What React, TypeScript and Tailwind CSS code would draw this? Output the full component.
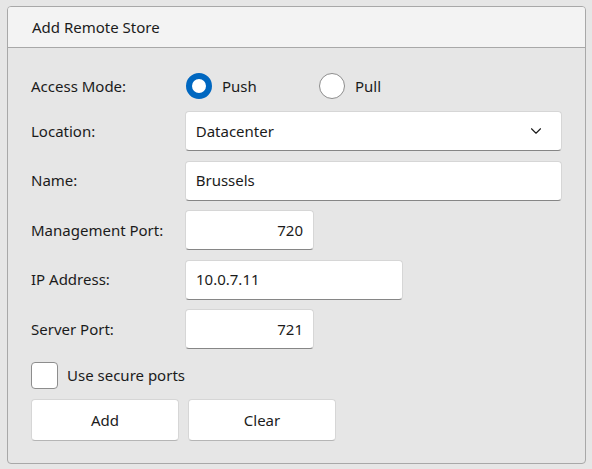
import { ChevronDown } from 'lucide-react';

const inputBox =
    'h-[40px] rounded-[4px] border border-[#d6d6d6] border-b-[#868686] bg-white px-[10px] flex items-center text-[15px] text-[#1b1b1b]';

function Row({ label, children }: { label: string; children: React.ReactNode }) {
    return (
        <div className="flex items-center">
            <div className="w-[154px] text-[15px] text-[#1b1b1b]">{label}</div>
            {children}
        </div>
    );
}

function Radio({ label, checked }: { label: string; checked?: boolean }) {
    return (
        <div className="flex w-[133px] items-center gap-[10px]">
            {checked ? (
                <span className="h-[26px] w-[26px] rounded-full border-[6px] border-[#0067c0] bg-white" />
            ) : (
                <span className="h-[26px] w-[26px] rounded-full border border-[#8d8d8d] bg-white" />
            )}
            <span className="text-[15px] text-[#1b1b1b]">{label}</span>
        </div>
    );
}

export default function App() {
    return (
        <div className="h-[469px] w-[592px] bg-[#e6e6e6] pt-[6px] pl-[7px] font-['Noto_Sans',sans-serif]">
            <div className="h-[458px] w-[579px] overflow-hidden rounded-[4px] border border-[#a8a8a8] bg-[#e6e6e6]">
                <div className="flex h-[41px] items-center border-b border-[#a8a8a8] bg-[#f3f3f3] pl-[24px] text-[15px] text-[#1b1b1b]">
                    Add Remote Store
                </div>
                <div className="flex flex-col px-[23px] pt-[25px]">
                    <Row label="Access Mode:">
                        <div className="flex items-center pl-[1px]">
                            <Radio label="Push" checked />
                            <Radio label="Pull" />
                        </div>
                    </Row>
                    <div className="mt-[12px] flex flex-col gap-[9.5px]">
                        <Row label="Location:">
                            <div className={`${inputBox} w-[378px] justify-between`}>
                                <span>Datacenter</span>
                                <ChevronDown size={18} strokeWidth={1.5} className="mr-[6px] text-[#1b1b1b]" />
                            </div>
                        </Row>
                        <Row label="Name:">
                            <div className={`${inputBox} w-[378px]`}>Brussels</div>
                        </Row>
                        <Row label="Management Port:">
                            <div className={`${inputBox} w-[129px] justify-end`}>720</div>
                        </Row>
                        <Row label="IP Address:">
                            <div className={`${inputBox} w-[218px]`}>10.0.7.11</div>
                        </Row>
                        <Row label="Server Port:">
                            <div className={`${inputBox} w-[129px] justify-end`}>721</div>
                        </Row>
                    </div>
                    <div className="mt-[13px] flex items-center gap-[9px]">
                        <span className="h-[27px] w-[27px] rounded-[4px] border border-[#8d8d8d] bg-white" />
                        <span className="text-[15px] text-[#1b1b1b]">Use secure ports</span>
                    </div>
                    <div className="mt-[10px] flex gap-[9px]">
                        <button className="h-[42px] w-[148px] rounded-[4px] border border-[#d6d6d6] border-b-[#b5b5b5] bg-white text-[15px] text-[#1b1b1b]">
                            Add
                        </button>
                        <button className="h-[42px] w-[148px] rounded-[4px] border border-[#d6d6d6] border-b-[#b5b5b5] bg-white text-[15px] text-[#1b1b1b]">
                            Clear
                        </button>
                    </div>
                </div>
            </div>
        </div>
    );
}
